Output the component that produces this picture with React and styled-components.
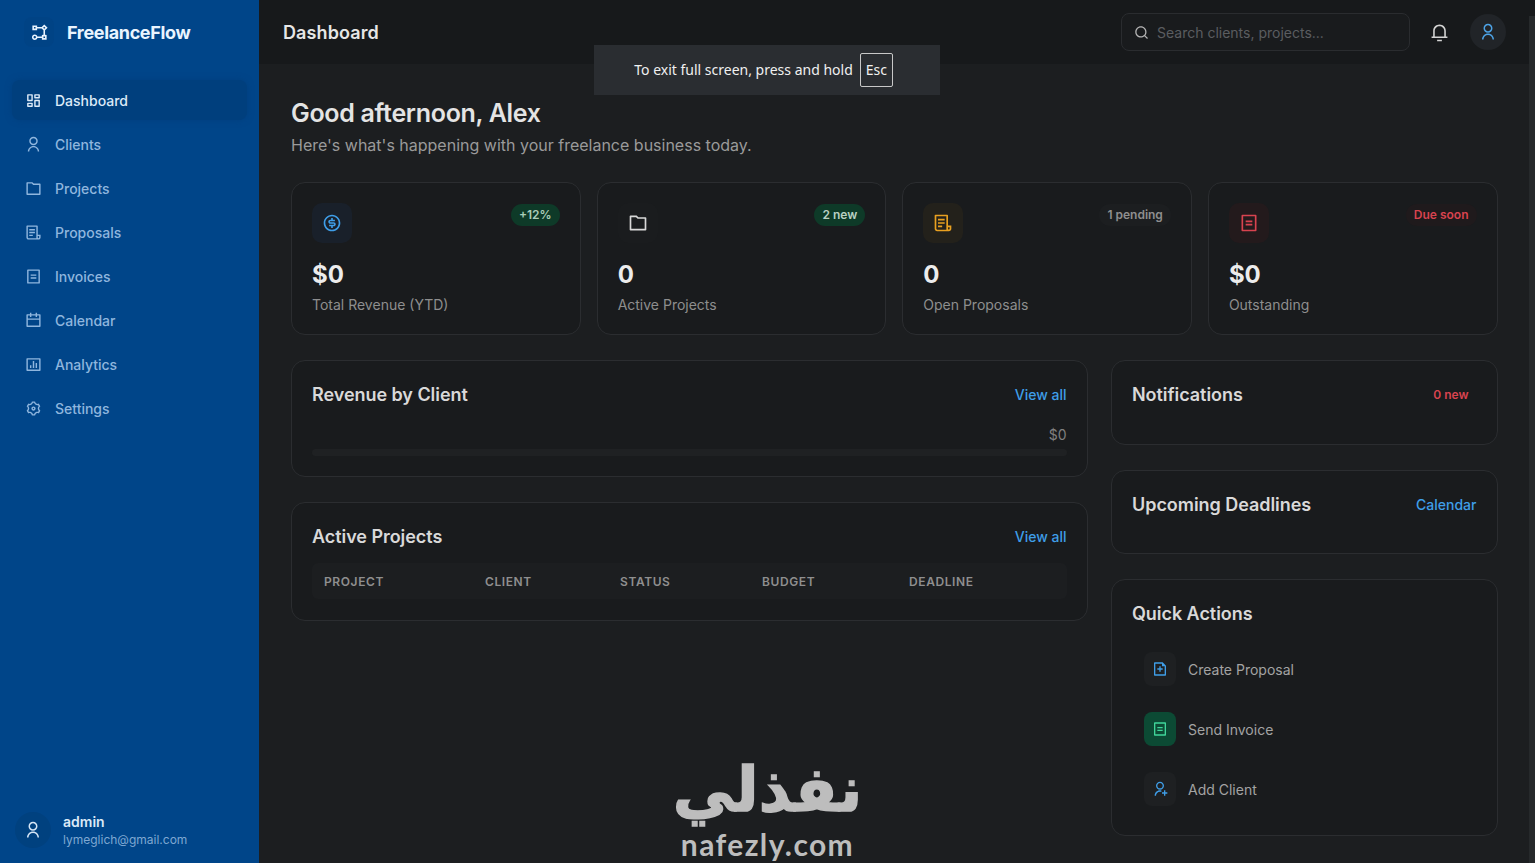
import React from 'react';
import styled, { createGlobalStyle } from 'styled-components';
import {
  RiFlowChart,
  RiDashboardLine,
  RiUserLine,
  RiFolderLine,
  RiFileList3Line,
  RiBillLine,
  RiCalendarLine,
  RiBarChartBoxLine,
  RiSettings3Line,
  RiSearchLine,
  RiNotification3Line,
  RiMoneyDollarCircleLine,
  RiFileAddLine,
  RiUserAddLine,
} from 'react-icons/ri';

const GlobalStyle = createGlobalStyle`
  html, body {
    margin: 0;
    height: 100%;
    overflow: hidden;
    background: #1c1e20;
    font-family: Inter, "Liberation Sans", sans-serif;
  }
  * { box-sizing: border-box; }
`;

const Shell = styled.div`
  display: flex;
  width: 1535px;
  height: 863px;
  position: relative;
  overflow: hidden;
`;

const Sidebar = styled.aside`
  width: 259px;
  flex-shrink: 0;
  background: #004589;
  display: flex;
  flex-direction: column;
  padding: 0 12px;
`;

const Brand = styled.div`
  height: 64px;
  display: flex;
  align-items: center;
  gap: 13px;
  padding-left: 12px;
  color: #e9f4ff;
  font-size: 18px;
  font-weight: 700;
  letter-spacing: -0.35px;
`;

const BrandMark = styled.span`
  width: 30px;
  height: 30px;
  border-radius: 8px;
  display: flex;
  align-items: center;
  justify-content: center;
  font-size: 19px;
  background: #004385;
`;

const Nav = styled.nav`
  display: flex;
  flex-direction: column;
  gap: 4px;
  margin-top: 16px;
  flex: 1;
`;

const NavItem = styled.a`
  height: 40px;
  display: flex;
  align-items: center;
  gap: 13px;
  padding: 0 13px;
  border-radius: 8px;
  font-size: 14px;
  font-weight: 500;
  width: 235px;
  color: ${({ $active }) => ($active ? '#dceaf8' : '#8fb6de')};
  background: ${({ $active }) => ($active ? '#003f7d' : 'transparent')};
  box-shadow: ${({ $active }) => ($active ? '0 0 6px #003f7d' : 'none')};
  svg { font-size: 17px; flex-shrink: 0; }
`;

const UserBox = styled.div`
  display: flex;
  align-items: flex-start;
  gap: 12px;
  padding: 0 0 14px 3px;
`;

const UserAvatar = styled.div`
  width: 36px;
  height: 36px;
  border-radius: 50%;
  background: #00417f;
  color: #d6e6f6;
  display: flex;
  align-items: center;
  justify-content: center;
  font-size: 18px;
`;

const UserText = styled.div`
  padding-top: 1px;
`;

const UserName = styled.div`
  font-size: 14px;
  font-weight: 600;
  line-height: 18px;
  color: #dbe9f7;
`;

const UserMail = styled.div`
  font-size: 12px;
  line-height: 18px;
  color: #7fa8d2;
`;

const Main = styled.div`
  flex: 1;
  min-width: 0;
  display: flex;
  flex-direction: column;
`;

const TopBar = styled.header`
  height: 64px;
  flex-shrink: 0;
  background: #17191b;
  display: flex;
  align-items: center;
  padding: 0 29px 0 24px;
`;

const PageTitle = styled.h1`
  margin: 0;
  flex: 1;
  font-size: 18px;
  font-weight: 600;
  letter-spacing: 0.1px;
  color: #e6e6e6;
`;

const SearchBox = styled.div`
  width: 289px;
  height: 38px;
  display: flex;
  align-items: center;
  gap: 8px;
  padding: 0 12px;
  border: 1px solid #2a2c2f;
  border-radius: 8px;
  background: #191b1d;
  color: #b5b5b5;
  font-size: 14px;
  margin-right: 20px;
  svg { font-size: 15px; flex-shrink: 0; }
`;

const SearchInput = styled.span`
  font-size: 14px;
  color: #5b5d60;
`;

const BellButton = styled.div`
  color: #d4d4d4;
  font-size: 19px;
  display: flex;
  margin-right: 21px;
`;

const TopAvatar = styled.div`
  width: 36px;
  height: 36px;
  border-radius: 50%;
  background: #212428;
  color: #4da3e6;
  display: flex;
  align-items: center;
  justify-content: center;
  font-size: 18px;
`;

const Content = styled.main`
  flex: 1;
  padding: 32px 37.5px 0 32px;
`;

const Greeting = styled.h2`
  margin: 0;
  font-size: 25px;
  line-height: 34px;
  font-weight: 600;
  letter-spacing: -0.3px;
  color: #e4e4e4;
`;

const SubGreeting = styled.p`
  margin: 2px 0 0;
  font-size: 16px;
  line-height: 26px;
  color: #9a9a9a;
`;

const StatsRow = styled.div`
  display: grid;
  grid-template-columns: repeat(4, 1fr);
  gap: 16px;
  margin-top: 24px;
`;

const Card = styled.section`
  background: #191b1d;
  border: 1px solid #2b2d30;
  border-radius: 14px;
`;

const StatCard = styled(Card)`
  height: 153px;
  padding: 20px;
`;

const StatTop = styled.div`
  display: flex;
  justify-content: space-between;
  align-items: flex-start;
`;

const StatIcon = styled.div`
  width: 40px;
  height: 40px;
  border-radius: 10px;
  display: flex;
  align-items: center;
  justify-content: center;
  font-size: 20px;
  color: ${({ $color }) => $color};
  background: ${({ $bg }) => $bg};
`;

const Badge = styled.span`
  margin-top: 1px;
  font-size: 12px;
  font-weight: 600;
  line-height: 22px;
  padding: 0 8px;
  border-radius: 11px;
  color: ${({ $color }) => $color};
  background: ${({ $bg }) => $bg};
`;

const StatValue = styled.div`
  margin-top: 15px;
  font-size: 24px;
  line-height: 34px;
  font-weight: 700;
  color: #ececec;
`;

const StatLabel = styled.div`
  margin-top: 3px;
  font-size: 14px;
  line-height: 20px;
  color: #8e8e8e;
`;

const Columns = styled.div`
  display: grid;
  grid-template-columns: 796.5px 386.5px;
  gap: 23.5px;
  margin-top: 25px;
  align-items: start;
`;

const Column = styled.div`
  display: flex;
  flex-direction: column;
  gap: 25px;
`;

const Panel = styled(Card)`
  padding: 19px 20px ${({ $bottom }) => $bottom || 20}px;
`;

const PanelHead = styled.div`
  display: flex;
  justify-content: space-between;
  align-items: center;
  height: 28px;
`;

const PanelTitle = styled.h3`
  margin: 0;
  font-size: 18px;
  font-weight: 600;
  letter-spacing: -0.05px;
  color: #d9d9d9;
`;

const PanelLink = styled.a`
  font-size: 14px;
  font-weight: 500;
  color: #3f9ee8;
`;

const NewCount = styled.span`
  font-size: 12px;
  font-weight: 600;
  padding-right: 8px;
  color: #d8434f;
`;

const RevenueAmount = styled.div`
  margin-top: 17px;
  text-align: right;
  font-size: 14px;
  line-height: 20px;
  color: #808080;
`;

const RevenueBar = styled.div`
  margin-top: 4px;
  height: 7px;
  border-radius: 4px;
  background: #1f2123;
`;

const TableHead = styled.div`
  margin-top: 13px;
  height: 36px;
  border-radius: 6px;
  background: #1c1e20;
  display: grid;
  grid-template-columns: 161px 135px 142px 147px 1fr;
  align-items: center;
  padding-left: 12px;
`;

const TableCol = styled.span`
  font-size: 12px;
  font-weight: 600;
  letter-spacing: 0.6px;
  text-transform: uppercase;
  color: #8f8f8f;
`;

const ActionList = styled.div`
  display: flex;
  flex-direction: column;
  gap: 26px;
  margin-top: 25px;
  padding: 0 12px 9px;
`;

const ActionRow = styled.div`
  display: flex;
  align-items: center;
  gap: 12px;
  font-size: 14px;
  color: #a3a3a3;
`;

const ActionIcon = styled.div`
  width: 32px;
  height: 34px;
  border-radius: 8px;
  display: flex;
  align-items: center;
  justify-content: center;
  font-size: 16px;
  color: ${({ $color }) => $color};
  background: ${({ $bg }) => $bg};
`;

const ScrollThumb = styled.div`
  position: absolute;
  right: 0;
  top: 16px;
  bottom: 0;
  width: 6px;
  background: #26292b;
`;

const FullscreenToast = styled.div`
  position: absolute;
  left: 594px;
  top: 45px;
  width: 346px;
  height: 50px;
  padding-right: 7px;
  background: #2a2d31;
  display: flex;
  align-items: center;
  justify-content: center;
  gap: 7px;
  font-family: "Noto Sans", "Open Sans", sans-serif;
  font-size: 14px;
  color: #f0f0f0;
`;

const ToastText = styled.span`
  margin-bottom: 2px;
`;

const EscKey = styled.span`
  width: 33px;
  height: 34px;
  padding-bottom: 2px;
  display: flex;
  align-items: center;
  justify-content: center;
  border: 1px solid #c8c8c8;
  border-radius: 2px;
`;

const Watermark = styled.div`
  position: absolute;
  left: 660px;
  top: 752px;
  width: 215px;
  display: flex;
  flex-direction: column;
  align-items: center;
  color: #bdbdbd;
  pointer-events: none;
`;

const WatermarkArabic = styled.div`
  font-family: "DejaVu Sans", sans-serif;
  font-size: 62px;
  font-weight: 700;
  line-height: 75px;
  direction: rtl;
  -webkit-text-stroke: 1.5px #bdbdbd;
`;

const WatermarkLatin = styled.div`
  font-family: Lato, "Open Sans", sans-serif;
  font-size: 30px;
  font-weight: 700;
  line-height: 34px;
  letter-spacing: 1.4px;
`;

const navItems = [
  { label: 'Dashboard', icon: RiDashboardLine, active: true },
  { label: 'Clients', icon: RiUserLine },
  { label: 'Projects', icon: RiFolderLine },
  { label: 'Proposals', icon: RiFileList3Line },
  { label: 'Invoices', icon: RiBillLine },
  { label: 'Calendar', icon: RiCalendarLine },
  { label: 'Analytics', icon: RiBarChartBoxLine },
  { label: 'Settings', icon: RiSettings3Line },
];

const stats = [
  { value: '$0', label: 'Total Revenue (YTD)', badge: '+12%', icon: RiMoneyDollarCircleLine, color: '#3f9ee8', bg: '#19202a', badgeColor: '#a9cdb8', badgeBg: '#0e3a28' },
  { value: '0', label: 'Active Projects', badge: '2 new', icon: RiFolderLine, color: '#d8d8d8', bg: '#1a1c1e', badgeColor: '#b9d0c2', badgeBg: '#0e3a28' },
  { value: '0', label: 'Open Proposals', badge: '1 pending', icon: RiFileList3Line, color: '#e8a020', bg: '#23211b', badgeColor: '#8f8f8f', badgeBg: '#1c1e20' },
  { value: '$0', label: 'Outstanding', badge: 'Due soon', icon: RiBillLine, color: '#d8434f', bg: '#231a1c', badgeColor: '#d8434f', badgeBg: '#1f1a1c' },
];

const columns = ['Project', 'Client', 'Status', 'Budget', 'Deadline'];

const actions = [
  { label: 'Create Proposal', icon: RiFileAddLine, color: '#3f9ee8', bg: '#1e2022' },
  { label: 'Send Invoice', icon: RiBillLine, color: '#3fd69a', bg: '#0c4a34' },
  { label: 'Add Client', icon: RiUserAddLine, color: '#3f9ee8', bg: '#1e2022' },
];

const App = () => (
  <Shell>
    <GlobalStyle />
    <Sidebar>
      <Brand>
        <BrandMark><RiFlowChart /></BrandMark>
        <span>FreelanceFlow</span>
      </Brand>
      <Nav>
        {navItems.map(({ label, icon: Icon, active }) => (
          <NavItem key={label} $active={active}>
            <Icon />
            {label}
          </NavItem>
        ))}
      </Nav>
      <UserBox>
        <UserAvatar><RiUserLine /></UserAvatar>
        <UserText>
          <UserName>admin</UserName>
          <UserMail>lymeglich@gmail.com</UserMail>
        </UserText>
      </UserBox>
    </Sidebar>

    <Main>
      <TopBar>
        <PageTitle>Dashboard</PageTitle>
        <SearchBox>
          <RiSearchLine />
          <SearchInput>Search clients, projects...</SearchInput>
        </SearchBox>
        <BellButton><RiNotification3Line /></BellButton>
        <TopAvatar><RiUserLine /></TopAvatar>
      </TopBar>

      <Content>
        <Greeting>Good afternoon, Alex</Greeting>
        <SubGreeting>Here's what's happening with your freelance business today.</SubGreeting>

        <StatsRow>
          {stats.map(({ value, label, badge, icon: Icon, color, bg, badgeColor, badgeBg }) => (
            <StatCard key={label}>
              <StatTop>
                <StatIcon $color={color} $bg={bg}><Icon /></StatIcon>
                <Badge $color={badgeColor} $bg={badgeBg}>{badge}</Badge>
              </StatTop>
              <StatValue>{value}</StatValue>
              <StatLabel>{label}</StatLabel>
            </StatCard>
          ))}
        </StatsRow>

        <Columns>
          <Column>
            <Panel>
              <PanelHead>
                <PanelTitle>Revenue by Client</PanelTitle>
                <PanelLink>View all</PanelLink>
              </PanelHead>
              <RevenueAmount>$0</RevenueAmount>
              <RevenueBar />
            </Panel>
            <Panel $bottom={21}>
              <PanelHead>
                <PanelTitle>Active Projects</PanelTitle>
                <PanelLink>View all</PanelLink>
              </PanelHead>
              <TableHead>
                {columns.map((col) => <TableCol key={col}>{col}</TableCol>)}
              </TableHead>
            </Panel>
          </Column>

          <Column>
            <Panel $bottom={36}>
              <PanelHead>
                <PanelTitle>Notifications</PanelTitle>
                <NewCount>0 new</NewCount>
              </PanelHead>
            </Panel>
            <Panel $bottom={35}>
              <PanelHead>
                <PanelTitle>Upcoming Deadlines</PanelTitle>
                <PanelLink>Calendar</PanelLink>
              </PanelHead>
            </Panel>
            <Panel>
              <PanelHead>
                <PanelTitle>Quick Actions</PanelTitle>
              </PanelHead>
              <ActionList>
                {actions.map(({ label, icon: Icon, color, bg }) => (
                  <ActionRow key={label}>
                    <ActionIcon $color={color} $bg={bg}><Icon /></ActionIcon>
                    {label}
                  </ActionRow>
                ))}
              </ActionList>
            </Panel>
          </Column>
        </Columns>
      </Content>
    </Main>

    <ScrollThumb />

    <FullscreenToast>
      <ToastText>To exit full screen, press and hold</ToastText>
      <EscKey>Esc</EscKey>
    </FullscreenToast>

    <Watermark>
      <WatermarkArabic>نفذلي</WatermarkArabic>
      <WatermarkLatin>nafezly.com</WatermarkLatin>
    </Watermark>
  </Shell>
);

export default App;
